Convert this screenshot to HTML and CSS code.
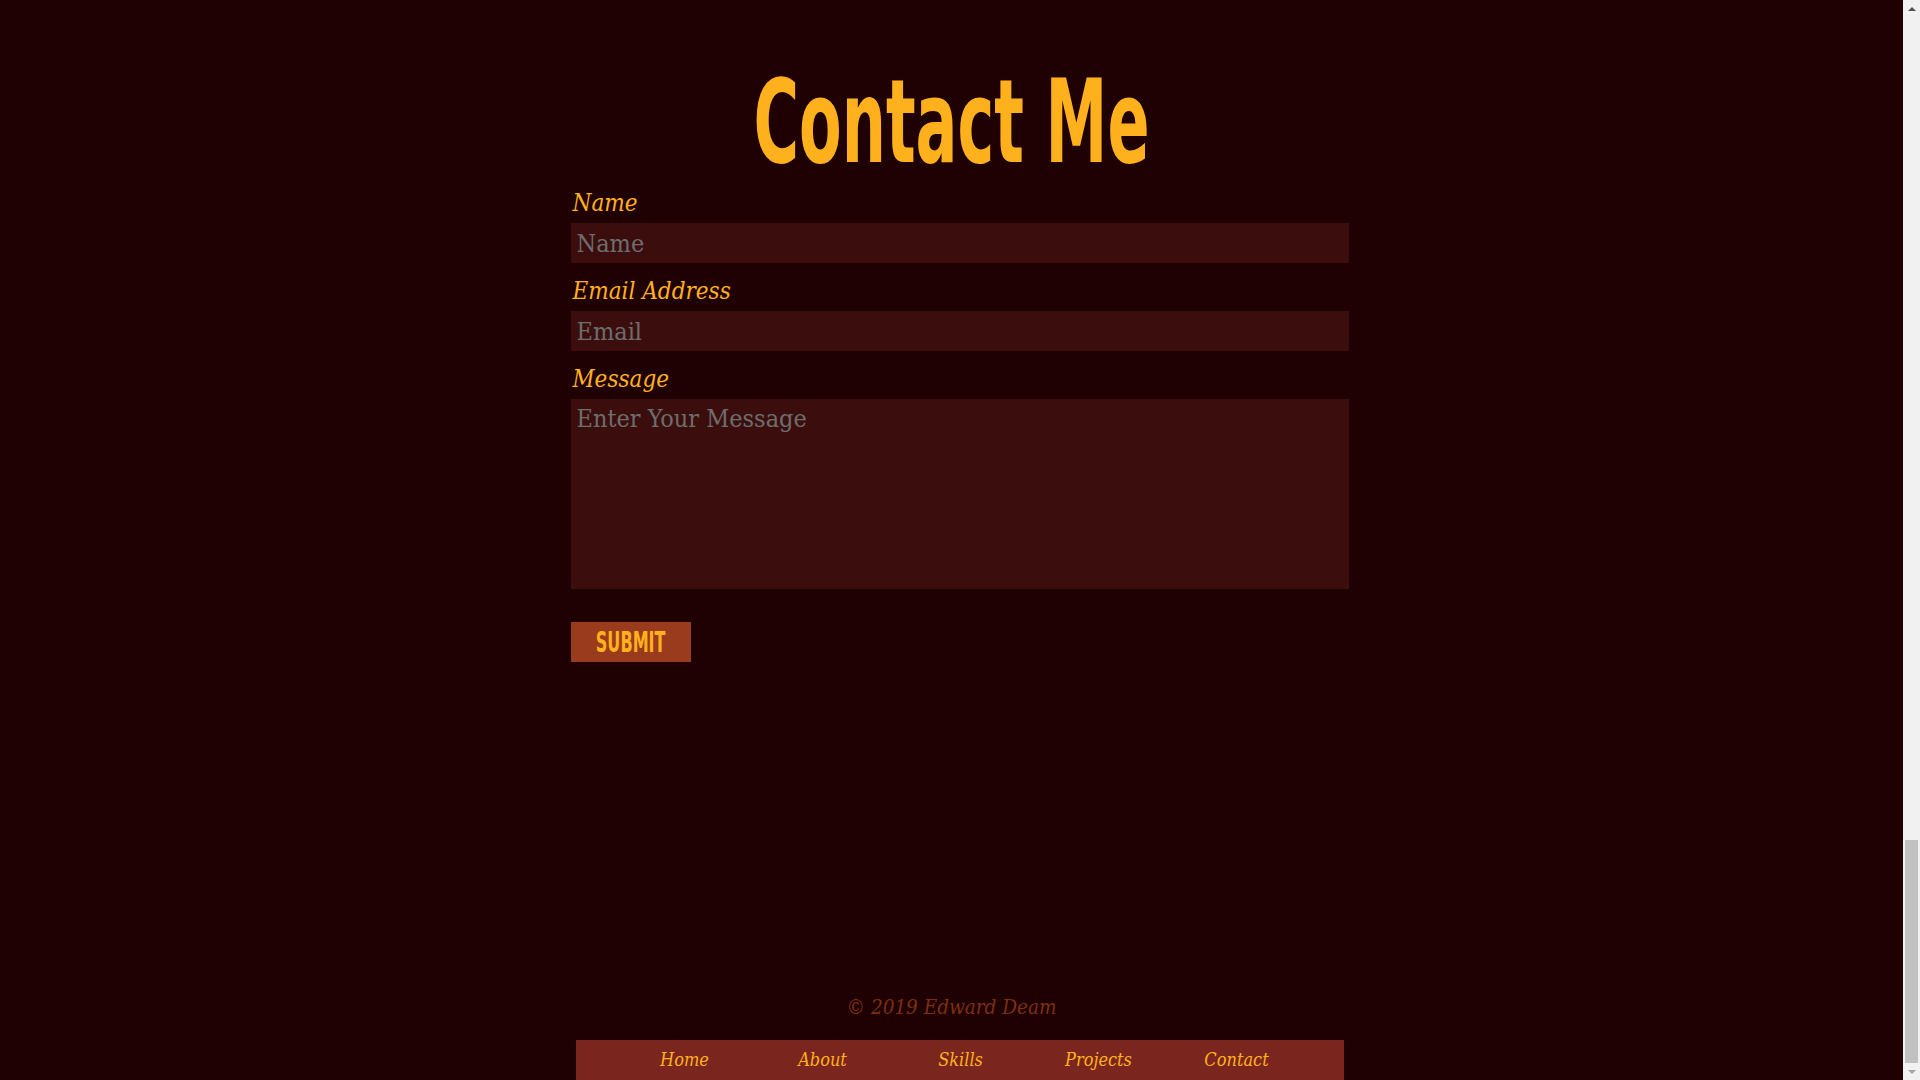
FILE: index.html
```html
<!DOCTYPE html>
<html lang="en">
<head>
<meta charset="utf-8">
<title>Contact Me</title>
<link rel="stylesheet" href="styles.css">
</head>
<body>
<div class="window">
  <main class="contact">
    <h1 class="title">Contact Me</h1>
    <div class="wrap">
      <form class="form">
        <label class="label" for="name">Name</label>
        <input class="field" id="name" type="text" placeholder="Name">
        <label class="label" for="email">Email Address</label>
        <input class="field" id="email" type="email" placeholder="Email">
        <label class="label" for="msg">Message</label>
        <textarea class="field area" id="msg" placeholder="Enter Your Message"></textarea>
        <button class="submit" type="button"><span class="submit-text">SUBMIT</span></button>
      </form>
    </div>
    <footer class="footer">
      <p class="copy">© 2019 Edward Deam</p>
      <div class="wrap">
        <nav class="nav">
          <a class="nav-item" href="#">Home</a>
          <a class="nav-item" href="#">About</a>
          <a class="nav-item" href="#">Skills</a>
          <a class="nav-item" href="#">Projects</a>
          <a class="nav-item" href="#">Contact</a>
        </nav>
      </div>
    </footer>
  </main>
  <div class="scrollbar" aria-hidden="true">
    <div class="sb-btn"><span class="arrow-up"></span></div>
    <div class="sb-track"><div class="sb-thumb"></div></div>
    <div class="sb-btn"><span class="arrow-down"></span></div>
  </div>
</div>
</body>
</html>
```
FILE: styles.css
```css
html, body {
  margin: 0;
  padding: 0;
  height: 100%;
  overflow: hidden;
  background: #1f0003;
}

.window {
  display: flex;
  height: 1080px;
}

.contact {
  flex: 1;
  min-width: 0;
  height: 1080px;
  display: flex;
  flex-direction: column;
}

.title {
  margin: 66px 0 0;
  font-family: "DejaVu Sans Condensed", "DejaVu Sans", sans-serif;
  font-stretch: condensed;
  font-weight: 700;
  font-size: 116px;
  line-height: 112px;
  color: #ffb11d;
  text-align: center;
  transform: scaleX(0.595);
}

.wrap {
  width: 980px;
  margin: 0 auto;
}

.form {
  margin: 10px 0 0 109px;
  width: 778px;
  display: flex;
  flex-direction: column;
  align-items: flex-start;
}

.label {
  display: block;
  margin: 0 0 5px 2px;
  font-family: "DejaVu Serif", serif;
  font-stretch: condensed;
  font-style: italic;
  font-size: 24px;
  line-height: 30px;
  color: #ffb11d;
}

.field {
  display: block;
  box-sizing: border-box;
  width: 778px;
  height: 40px;
  margin: 0 0 13px;
  padding: 0 6px;
  border: none;
  outline: none;
  border-radius: 0;
  background: #3c0d0d;
  font-family: "DejaVu Serif", serif;
  font-stretch: condensed;
  font-size: 25px;
  color: #e0e0e0;
}

.field::placeholder {
  color: #6d6d6d;
  opacity: 1;
}

.area {
  height: 190px;
  padding: 5px 6px;
  resize: none;
  margin-bottom: 33px;
}

.submit {
  width: 120px;
  height: 40px;
  border: none;
  padding: 0;
  background: #9b3b1e;
  display: flex;
  align-items: center;
  justify-content: center;
  cursor: pointer;
}

.submit-text {
  display: block;
  font-family: "DejaVu Sans Condensed", "DejaVu Sans", sans-serif;
  font-stretch: condensed;
  font-weight: 700;
  font-size: 29px;
  line-height: 40px;
  color: #ffb11d;
  transform: scaleX(0.615);
}

.footer {
  margin-top: auto;
}

.copy {
  margin: 0 0 20px;
  text-align: center;
  font-family: "DejaVu Serif", serif;
  font-stretch: condensed;
  font-style: italic;
  font-size: 20.5px;
  line-height: 26px;
  color: #7e2f0f;
}

.nav {
  box-sizing: border-box;
  margin-left: 114px;
  width: 768px;
  height: 40px;
  padding-left: 2px;
  background: #7a261f;
  display: flex;
  justify-content: center;
}

.nav-item {
  width: 138px;
  text-align: center;
  font-family: "DejaVu Serif", serif;
  font-stretch: condensed;
  font-style: italic;
  font-size: 18px;
  line-height: 40px;
  color: #ffb11d;
  text-decoration: none;
}

/* window scrollbar */
.scrollbar {
  width: 17px;
  flex: none;
  display: flex;
  flex-direction: column;
  background: #f1f1f1;
}

.sb-btn {
  height: 17px;
  flex: none;
  display: flex;
  align-items: center;
  justify-content: center;
}

.arrow-up {
  width: 0;
  height: 0;
  border-left: 4px solid transparent;
  border-right: 4px solid transparent;
  border-bottom: 4px solid #505050;
}

.arrow-down {
  width: 0;
  height: 0;
  border-left: 4px solid transparent;
  border-right: 4px solid transparent;
  border-top: 4px solid #a3a3a3;
}

.sb-track {
  flex: 1;
  display: flex;
  flex-direction: column;
  justify-content: flex-end;
  padding: 0 2px;
}

.sb-thumb {
  height: 223px;
  background: #c1c1c1;
}
```
